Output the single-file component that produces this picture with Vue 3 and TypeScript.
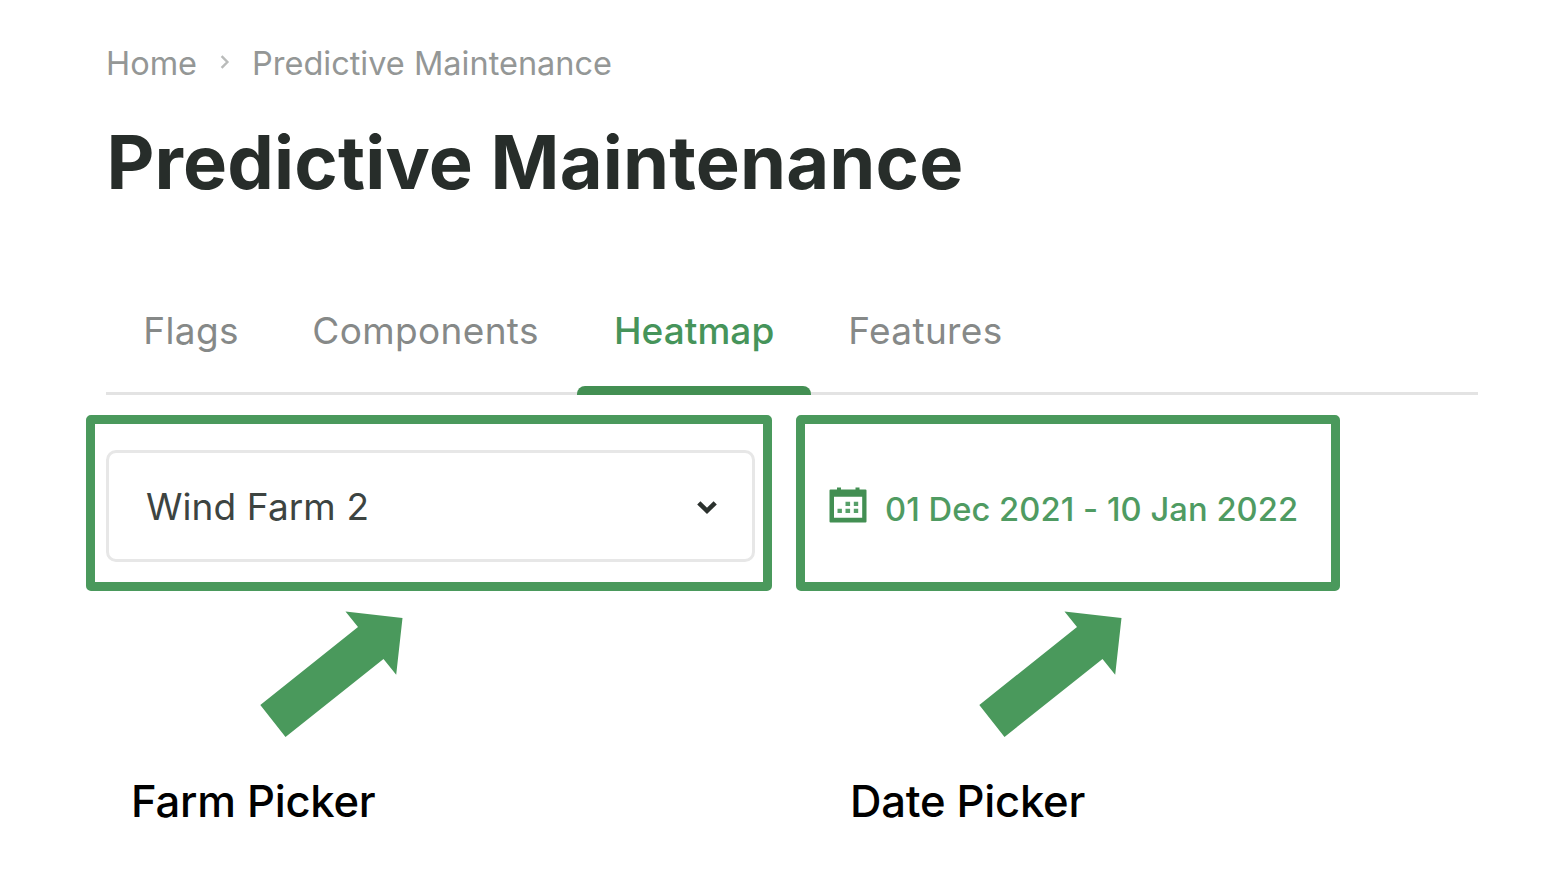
<script setup lang="ts">
interface Tab {
  id: string
  label: string
}

const tabs: Tab[] = [
  { id: 'flags', label: 'Flags' },
  { id: 'components', label: 'Components' },
  { id: 'heatmap', label: 'Heatmap' },
  { id: 'features', label: 'Features' },
]
const activeTab = 'heatmap'
const arrowPoints = '0.3,94 98,16 85.5,0.5 142.5,7 136.2,63.7 123.5,48 25.5,126'
</script>

<template>
  <main class="page">
    <nav class="crumbs">
      <span class="crumb home">Home</span>
      <svg class="crumb-sep" width="12" height="18" viewBox="0 0 12 18">
        <path d="M2.6 3.2 8.4 9 2.6 14.8" />
      </svg>
      <span class="crumb">Predictive Maintenance</span>
    </nav>

    <h1 class="title">Predictive Maintenance</h1>

    <div class="tabs">
      <div
        v-for="tab in tabs"
        :key="tab.id"
        class="tab"
        :class="[tab.id, { active: tab.id === activeTab }]"
      >
        {{ tab.label }}
      </div>
    </div>

    <div class="pickers">
      <section class="column farm">
        <div class="frame">
          <div class="select">
            <span class="select-value">Wind Farm 2</span>
            <svg class="chevron" width="24" height="18" viewBox="0 0 24 18">
              <path d="M3.8 4.8 12 12.8 20.2 4.8" />
            </svg>
          </div>
        </div>
        <svg class="arrow" width="143" height="127" viewBox="0 0 143 127">
          <polygon :points="arrowPoints" />
        </svg>
        <p class="caption">Farm Picker</p>
      </section>

      <section class="column date">
        <div class="frame">
          <svg class="calendar" width="38" height="36" viewBox="0 0 38 36">
            <path
              fill-rule="evenodd"
              d="M1.5 2.5H8V.5H12V2.5H26.5V.5H30.5V2.5H36.5Q37.5 2.5 37.5 3.5V34.5Q37.5 35.5 36.5 35.5H1.5Q.5 35.5 .5 34.5V3.5Q.5 2.5 1.5 2.5ZM5 9.7V30.8H33.2V9.7Z"
            />
            <path
              class="dots"
              d="M16.5 14.7h4.6v4.4h-4.6zM24.8 14.7h4.4v4.4h-4.4zM8.5 21.7h4.4v4.4h-4.4zM16.5 21.7h4.6v4.4h-4.6zM24.8 21.7h4.4v4.4h-4.4z"
            />
          </svg>
          <span class="date-value">01 Dec 2021 - 10 Jan 2022</span>
        </div>
        <svg class="arrow" width="143" height="127" viewBox="0 0 143 127">
          <polygon :points="arrowPoints" />
        </svg>
        <p class="caption">Date Picker</p>
      </section>
    </div>
  </main>
</template>

<style>
body {
  background: #fff;
}
</style>

<style scoped>
.page {
  box-sizing: border-box;
  width: 1556px;
  height: 888px;
  padding-top: 43px;
  overflow: hidden;
  background: #fff;
  font-family: Inter, "Liberation Sans", sans-serif;
  white-space: nowrap;
}

.crumbs {
  display: flex;
  height: 42px;
  margin-left: 106px;
  line-height: 42px;
  font-size: 32.5px;
  color: #949796;
}

.home {
  width: 113px;
}

.crumb-sep {
  width: 12px;
  margin: 10px 21px 0 0;
}

.crumb-sep path {
  fill: none;
  stroke: #b9bbba;
  stroke-width: 2.4;
}

.title {
  height: 90px;
  margin: 32px 0 0 106.5px;
  line-height: 90px;
  font-size: 74px;
  font-weight: 700;
  letter-spacing: 0.15px;
  color: #272d2a;
}

.tabs {
  box-sizing: border-box;
  display: flex;
  width: 1372px;
  height: 120px;
  margin: 68px 0 0 106px;
  border-bottom: 3px solid #e3e3e3;
}

.tab {
  box-sizing: border-box;
  height: 120px;
  padding-left: 37.3px;
  line-height: 111px;
  font-size: 37px;
  letter-spacing: 0.35px;
  color: #868988;
}

.flags { width: 169px; }
.components { width: 302px; }
.heatmap { width: 234px; }

.tab.active {
  position: relative;
  padding-left: 37px;
  font-weight: 500;
  letter-spacing: 0.05px;
  color: #46945a;
}

.tab.active::after {
  content: "";
  position: absolute;
  left: 0;
  right: 0;
  bottom: 0;
  height: 9px;
  border-radius: 8px 8px 0 0;
  background: #438f53;
}

.pickers {
  display: flex;
  gap: 24px;
  margin: 20px 0 0 85.5px;
}

.frame {
  box-sizing: border-box;
  display: flex;
  height: 176px;
  border: 9px solid #4a995c;
  border-radius: 5px;
}

.farm .frame { width: 686.5px; }
.date .frame { width: 544px; }

.select {
  box-sizing: border-box;
  display: flex;
  justify-content: space-between;
  width: 649px;
  height: 112px;
  margin: 26px 0 0 11.5px;
  padding: 0 33px 0 37px;
  border: 3px solid #e7e7e7;
  border-radius: 10px;
}

.select-value {
  line-height: 108px;
  font-size: 37px;
  letter-spacing: 0.1px;
  color: #3d4441;
}

.chevron {
  margin-top: 45px;
}

.chevron path {
  fill: none;
  stroke: #2b312e;
  stroke-width: 4.6;
}

.calendar {
  margin: 63px 0 0 24px;
  fill: #438f53;
}

.dots {
  fill: #57a069;
}

.date-value {
  margin-left: 18px;
  line-height: 170px;
  font-size: 32.7px;
  font-weight: 500;
  letter-spacing: 0.05px;
  color: #4f9b62;
}

.arrow {
  display: block;
  margin: 20px 0 0 174px;
  fill: #4a995c;
}

.caption {
  margin: 39px 0 0 45.5px;
  line-height: 50px;
  font-size: 43.6px;
  font-weight: 450;
  letter-spacing: -0.25px;
  color: #000;
}

.date .arrow { margin-left: 182.5px; }
.date .caption { margin-left: 54px; }
</style>
